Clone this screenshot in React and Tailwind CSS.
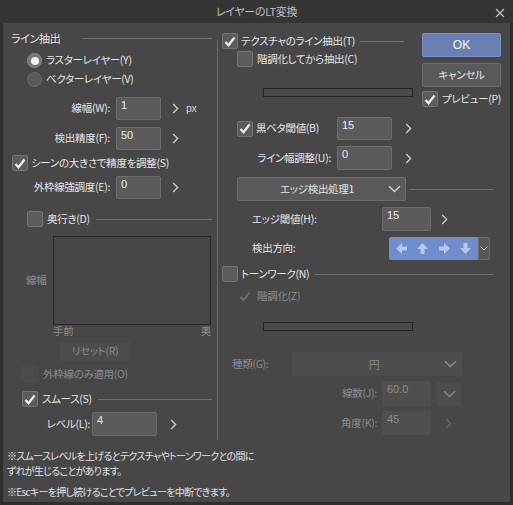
import React from 'react';

// LT conversion dialog (dark theme)
const Check = ({ on, dim }) => (
    <div className={`w-[16px] h-[16px] shrink-0 rounded-[2px] border flex items-center justify-center ${dim ? 'bg-[#4b4b4b] border-[#4e4e4e]' : 'bg-[#5c5c5c] border-[#747474]'}`}>
        {on && (
            <svg width="12" height="11" viewBox="0 0 12 11">
                <path d="M1.5 6l3 3.2L10.5 1.5" fill="none" stroke={dim ? '#6a6a6a' : '#f0f0f0'} strokeWidth="2.2" />
            </svg>
        )}
    </div>
);

const Radio = ({ on }) => (
    <div className={`w-[15px] h-[15px] shrink-0 rounded-full border flex items-center justify-center ${on ? 'bg-[#777] border-[#8a8a8a]' : 'bg-[#5a5a5a] border-[#6a6a6a]'}`}>
        {on && <div className="w-[8px] h-[8px] rounded-full bg-[#f2f2f2]" />}
    </div>
);

const Next = ({ dim }) => (
    <svg width="7" height="11" viewBox="0 0 7 11" className="shrink-0">
        <path d="M1.2 1l4.4 4.5-4.4 4.5" fill="none" stroke={dim ? '#666' : '#c9c9c9'} strokeWidth="1.4" />
    </svg>
);

const Down = ({ dim }) => (
    <svg width="13" height="8" viewBox="0 0 13 8" className="shrink-0">
        <path d="M1 1.2l5.5 5.3 5.5-5.3" fill="none" stroke={dim ? '#8a8a8a' : '#cfcfcf'} strokeWidth="1.5" />
    </svg>
);

const Field = ({ value, w, h = 'h-[23px]', dim }) => (
    <div className={`${w} ${h} shrink-0 rounded-[2px] border px-[4px] pt-[2px] text-[11px] tracking-normal font-['Liberation_Sans',sans-serif] ${dim ? 'bg-[#4f4f4f] border-[#4f4f4f] text-[#8c8c8c]' : 'bg-[#5b5b5b] border-[#6c6c6c] text-[#ececec]'}`}>
        {value}
    </div>
);

const Rule = ({ cls = '' }) => <div className={`flex-1 h-px bg-[#6e6e6e] ${cls}`} />;

const Bar = ({ mt }) => (
    <div className={`${mt} ml-[45px] w-[150px] h-[9px] border border-[#262626] bg-[#4a4a4a]`} />
);

const Arrow = ({ dir }) => {
    const rot = { left: 180, up: -90, right: 0, down: 90 }[dir];
    return (
        <svg width="13" height="13" viewBox="0 0 13 13" style={{ transform: `rotate(${rot}deg)` }}>
            <path d="M1 4.5h5V1l6 5.5-6 5.5V8.5H1z" fill="#b5c8ec" />
        </svg>
    );
};

export default function App() {
    return (
        <div className="w-[513px] h-[505px] bg-[#2f2f2f] flex flex-col text-[10.5px] tracking-[-0.3px] leading-none text-[#e4e4e4] font-['Noto_Sans_CJK_JP','Noto_Sans',sans-serif] [font-feature-settings:'palt'] whitespace-nowrap select-none">
            {/* title bar */}
            <div className="h-[23px] shrink-0 bg-[#353535] flex items-center justify-center relative">
                <span className="text-[11px] text-[#bdbdbd]">レイヤーのLT変換</span>
                <svg width="10" height="10" viewBox="0 0 10 10" className="absolute right-[8px] top-[8px]">
                    <path d="M1 1l8 8M9 1L1 9" stroke="#bdbdbd" strokeWidth="1.3" />
                </svg>
            </div>

            <div className="flex-1 mx-[3px] mb-[3px] bg-[#474747] flex flex-col">
                <div className="flex">
                    {/* left column */}
                    <div className="w-[214px] shrink-0 flex flex-col">
                        <div className="mt-[7px] h-[16px] flex items-center pl-[8px] pr-[5px]">
                            <span className="text-[11px]">ライン抽出</span>
                            <Rule cls="ml-[22px]" />
                        </div>
                        <div className="mt-[5px] h-[19px] flex items-center gap-[4px] ml-[24px]">
                            <Radio on />
                            <span>ラスターレイヤー(Y)</span>
                        </div>
                        <div className="h-[19px] flex items-center gap-[4px] ml-[24px]">
                            <Radio />
                            <span>ベクターレイヤー(V)</span>
                        </div>
                        <div className="mt-[8px] h-[23px] flex items-center">
                            <span className="w-[109px] text-right pr-[2px]">線幅(W):</span>
                            <div className="ml-[4px]"><Field value="1" w="w-[45px]" /></div>
                            <div className="ml-[11px]"><Next /></div>
                            <span className="ml-[7px] font-['Liberation_Sans',sans-serif] text-[#d6d6d6]">px</span>
                        </div>
                        <div className="mt-[7px] h-[23px] flex items-center">
                            <span className="w-[109px] text-right pr-[2px]">検出精度(F):</span>
                            <div className="ml-[4px]"><Field value="50" w="w-[45px]" /></div>
                            <div className="ml-[11px]"><Next /></div>
                        </div>
                        <div className="mt-[5px] h-[16px] flex items-center gap-[3px] ml-[9px]">
                            <Check on />
                            <span>シーンの大きさで精度を調整(S)</span>
                        </div>
                        <div className="mt-[5px] h-[23px] flex items-center">
                            <span className="w-[109px] text-right pr-[2px]">外枠線強調度(E):</span>
                            <div className="ml-[4px]"><Field value="0" w="w-[45px]" /></div>
                            <div className="ml-[11px]"><Next /></div>
                        </div>
                        <div className="mt-[12px] h-[16px] flex items-center ml-[24px] pr-[5px]">
                            <Check />
                            <span className="ml-[4px]">奥行き(D)</span>
                            <Rule cls="ml-[6px]" />
                        </div>
                        <div className="mt-[9px] h-[89px] flex items-center">
                            <span className="ml-[23px] w-[27px] text-[#8d8d8d]">線幅</span>
                            <div className="w-[158px] h-full border border-[#2a2a2a]" />
                        </div>
                        <div className="h-[13px] ml-[50px] w-[158px] flex justify-between items-center text-[#8d8d8d]">
                            <span>手前</span>
                            <span>奥</span>
                        </div>
                        <div className="mt-[4px] ml-[57px] w-[70px] h-[19px] bg-[#4c4c4c] flex items-center justify-center text-[#8a8a8a]">
                            リセット(R)
                        </div>
                        <div className="mt-[5px] h-[16px] flex items-center gap-[5px] ml-[19px]">
                            <Check dim />
                            <span className="text-[#8a8a8a]">外枠線のみ適用(O)</span>
                        </div>
                        <div className="mt-[9px] h-[16px] flex items-center ml-[19px] pr-[5px]">
                            <Check on />
                            <span className="ml-[4px]">スムース(S)</span>
                            <Rule cls="ml-[6px]" />
                        </div>
                        <div className="mt-[5px] h-[24px] flex items-center">
                            <span className="w-[87px] text-right">レベル(L):</span>
                            <div className="ml-[2px]"><Field value="4" w="w-[65px]" h="h-[24px]" /></div>
                            <div className="ml-[13px]"><Next /></div>
                        </div>
                    </div>

                    {/* divider */}
                    <div className="w-px bg-[#6a6a6a] mt-[17px] mb-[-4px]" />

                    {/* right column */}
                    <div className="flex-1 flex flex-col">
                        <div className="flex">
                            <div className="w-[204px] flex flex-col">
                                <div className="mt-[10px] h-[16px] flex items-center ml-[4px] pr-[18px]">
                                    <Check on />
                                    <span className="ml-[3px]">テクスチャのライン抽出(T)</span>
                                    <Rule cls="ml-[5px]" />
                                </div>
                                <div className="mt-[2px] h-[16px] flex items-center gap-[4px] ml-[19px]">
                                    <Check />
                                    <span>階調化してから抽出(C)</span>
                                </div>
                                <Bar mt="mt-[21px]" />
                                <div className="mt-[20px] h-[23px] flex items-center ml-[19px]">
                                    <div className="w-[100px] flex items-center gap-[3px]">
                                        <Check on />
                                        <span>黒ベタ閾値(B)</span>
                                    </div>
                                    <Field value="15" w="w-[55px]" />
                                    <div className="ml-[13px]"><Next /></div>
                                </div>
                                <div className="mt-[6px] h-[24px] flex items-center ml-[19px]">
                                    <span className="w-[100px] text-right pr-[6px]">ライン幅調整(U):</span>
                                    <Field value="0" w="w-[55px]" h="h-[24px]" />
                                    <div className="ml-[13px]"><Next /></div>
                                </div>
                            </div>
                            <div className="w-[79px] flex flex-col">
                                <div className="mt-[10px] h-[24px] rounded-[2px] bg-[#6b80b2] border border-[#7c90c1] flex items-center justify-center text-[12px] tracking-normal text-[#f4f4f4] font-['Liberation_Sans',sans-serif]">
                                    OK
                                </div>
                                <div className="mt-[6px] h-[24px] rounded-[2px] bg-[#595959] border border-[#6c6c6c] flex items-center justify-center">
                                    キャンセル
                                </div>
                                <div className="mt-[4px] h-[16px] flex items-center gap-[4px]">
                                    <Check on />
                                    <span>プレビュー(P)</span>
                                </div>
                            </div>
                        </div>

                        <div className="mt-[7px] h-[24px] flex items-center ml-[19px] pr-[17px]">
                            <div className="w-[169px] h-full rounded-[2px] bg-[#5a5a5a] border border-[#6c6c6c] flex items-center pl-[8px] pr-[4px]">
                                <span className="flex-1 text-center">エッジ検出処理1</span>
                                <Down />
                            </div>
                            <Rule cls="ml-[4px]" />
                        </div>
                        <div className="mt-[6px] h-[24px] flex items-center ml-[34px]">
                            <span className="w-[130px]">エッジ閾値(H):</span>
                            <Field value="15" w="w-[49px]" h="h-[24px]" />
                            <div className="ml-[10px]"><Next /></div>
                        </div>
                        <div className="mt-[6px] h-[23px] flex items-center ml-[34px]">
                            <span className="w-[137px]">検出方向:</span>
                            <div className="w-[89px] h-full rounded-l-[2px] bg-[#6f8dcb] flex items-center justify-around px-[2px]">
                                <Arrow dir="left" />
                                <Arrow dir="up" />
                                <Arrow dir="right" />
                                <Arrow dir="down" />
                            </div>
                            <div className="w-[12px] h-full rounded-r-[2px] bg-[#585858] border border-[#6c6c6c] flex items-center justify-center">
                                <svg width="8" height="5" viewBox="0 0 8 5"><path d="M.5.5L4 4 7.5.5" fill="none" stroke="#cfcfcf" /></svg>
                            </div>
                        </div>
                        <div className="mt-[6px] h-[16px] flex items-center ml-[4px] pr-[17px]">
                            <Check />
                            <span className="ml-[3px]">トーンワーク(N)</span>
                            <Rule cls="ml-[6px]" />
                        </div>
                        <div className="mt-[6px] h-[16px] flex items-center gap-[4px] ml-[19px]">
                            <div className="w-[16px] h-[16px] flex items-center justify-center">
                                <svg width="12" height="11" viewBox="0 0 12 11"><path d="M1.5 6l3 3.2L10.5 1.5" fill="none" stroke="#6c6c6c" strokeWidth="2" /></svg>
                            </div>
                            <span className="text-[#8a8a8a]">階調化(Z)</span>
                        </div>
                        <Bar mt="mt-[18px]" />
                        <div className="mt-[21px] h-[24px] flex items-center ml-[14px] text-[#8a8a8a]">
                            <span className="w-[60px]">種類(G):</span>
                            <div className="w-[170px] h-full bg-[#4d4d4d] flex items-center pr-[5px]">
                                <span className="flex-1 text-center pl-[12px] text-[11px]">円</span>
                                <Down dim />
                            </div>
                        </div>
                        <div className="mt-[5px] h-[25px] flex items-center text-[#8a8a8a]">
                            <span className="w-[161px] text-right pr-[2px]">線数(J):</span>
                            <div className="ml-[3px]"><Field value="60.0" w="w-[49px]" h="h-[25px]" dim /></div>
                            <div className="ml-[6px] w-[24px] h-[24px] bg-[#4d4d4d] flex items-center justify-center">
                                <Down dim />
                            </div>
                        </div>
                        <div className="mt-[5px] h-[24px] flex items-center text-[#8a8a8a]">
                            <span className="w-[161px] text-right pr-[2px]">角度(K):</span>
                            <div className="ml-[3px]"><Field value="45" w="w-[49px]" h="h-[24px]" dim /></div>
                            <div className="ml-[14px]"><Next dim /></div>
                        </div>
                    </div>
                </div>

                {/* notes */}
                <div className="mt-[12px] ml-[4px] flex flex-col text-[10px] tracking-[-0.7px] leading-[15px] text-[#e0e0e0]">
                    <span>※スムースレベルを上げるとテクスチャやトーンワークとの間に</span>
                    <span>ずれが生じることがあります。</span>
                    <span className="mt-[6px]">※Escキーを押し続けることでプレビューを中断できます。</span>
                </div>
            </div>
        </div>
    );
}
